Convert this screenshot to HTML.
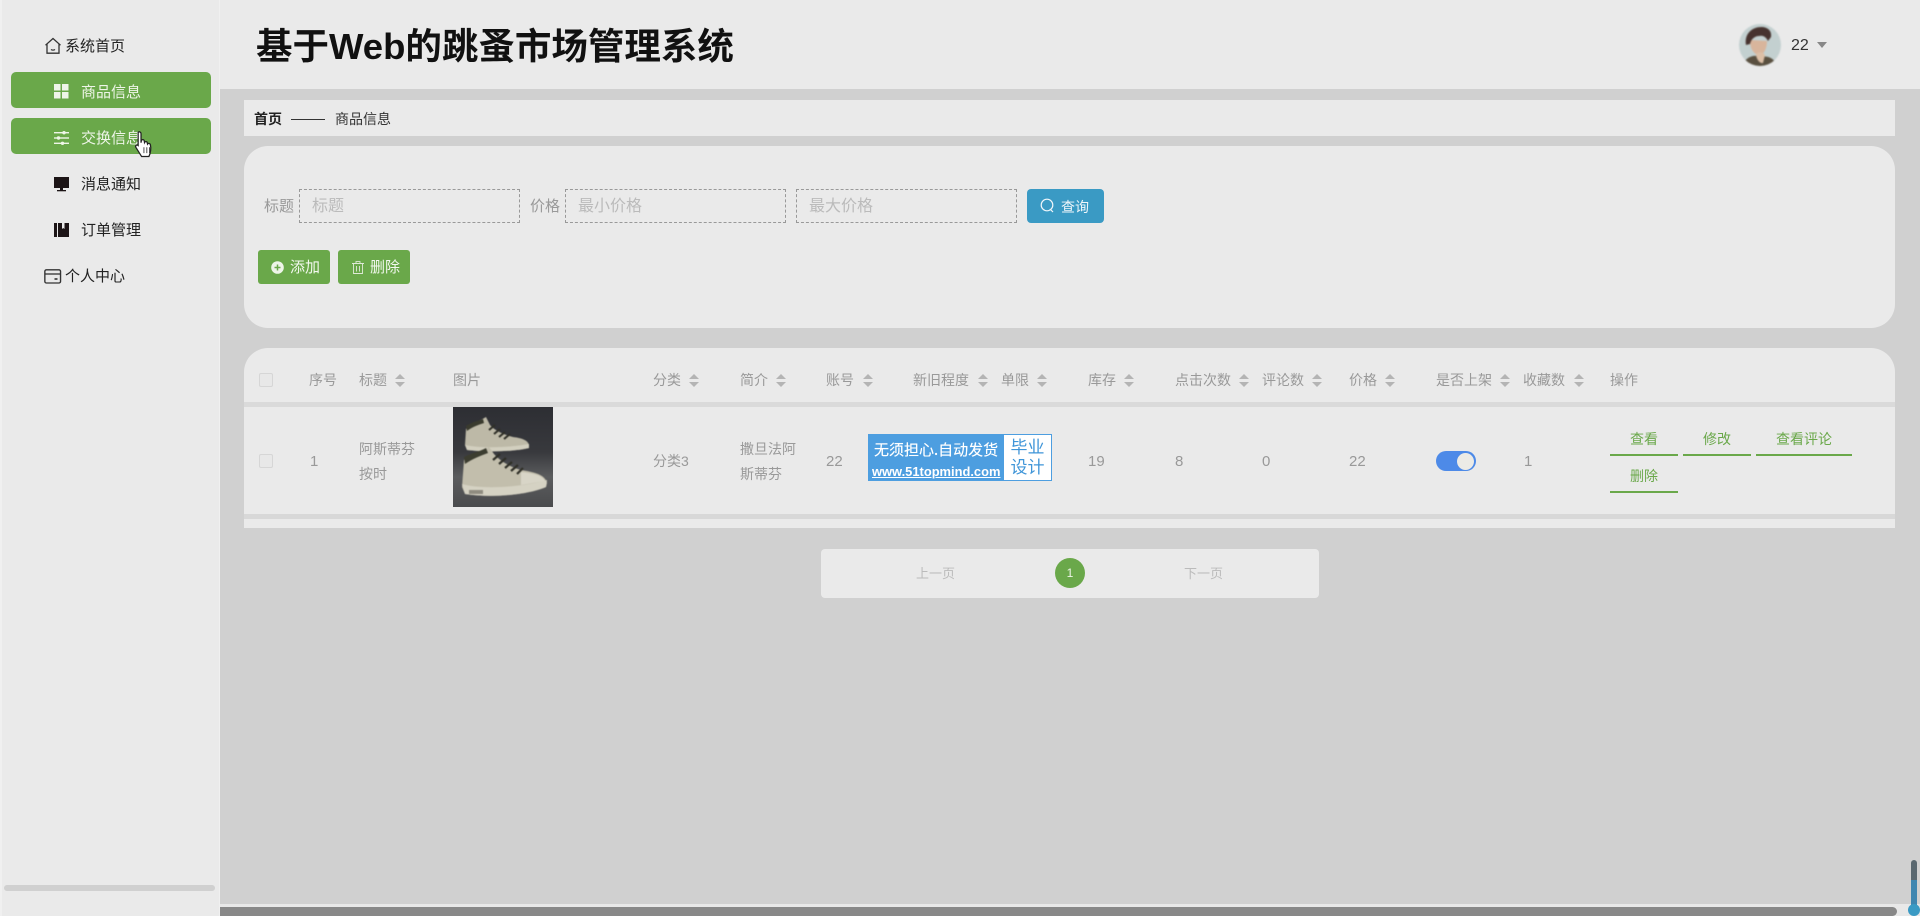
<!DOCTYPE html>
<html lang="zh"><head><meta charset="utf-8"><title>基于Web的跳蚤市场管理系统</title>
<style>
*{margin:0;padding:0;box-sizing:border-box}
html,body{width:1920px;height:916px;overflow:hidden;background:#d0d0d0}
body{position:relative;font-family:"Liberation Sans","Noto Sans CJK SC",sans-serif;font-size:14px;color:#999}
.a{position:absolute}
.t{position:absolute;height:24px;line-height:24px;white-space:nowrap}
.c{background:#eaeaea;position:absolute}
.m{position:absolute;left:11px;width:200px;height:36px;background:#6aa84a;border-radius:5px}
.mt{font-size:15px;color:#222}
.w{color:#eef5e8}
.in{position:absolute;top:189px;height:34px;width:221px;border:1px dashed #999}
.ph{font-size:16px;color:#bbb}
.lb{font-size:15px;color:#999}
.s{position:absolute;width:10px;height:13px;top:373.500px;margin-left:1px}
.s:before,.s:after{content:"";position:absolute;left:0;border-left:5px solid transparent;border-right:5px solid transparent}
.s:before{top:0;border-bottom:5.500px solid #b4b4b4}
.s:after{bottom:0;border-top:5.500px solid #b4b4b4}
.cb{position:absolute;left:259px;width:14px;height:14px;border:1px solid #d6d6d6;background:#e8e8e8;border-radius:2px}
.ac{position:absolute;height:33px;line-height:33px;text-align:center;color:#6aa84a;font-size:14px;border-bottom:2px solid #6aa84a}
.btn{position:absolute;border-radius:3px;background:#6aa84a;color:#f2f8ee;top:250px;height:34px;width:72px}
.n{font-size:15px;margin-top:1px}
svg{position:absolute;display:block}
</style></head><body>

<!-- sidebar -->
<div class="c" style="left:0;top:0;width:219px;height:916px;border-left:2px solid #f0f0f0"></div>
<div class="a" style="left:219px;top:0;width:1px;height:916px;background:#f0f0f0"></div>
<div class="m" style="top:72px"></div>
<div class="m" style="top:118px"></div>

<svg style="left:44px;top:37px" width="18" height="18" viewBox="0 0 18 18" fill="none" stroke="#333" stroke-width="1.3"><path d="M1.500 8.200 9 1.500l7.500 6.700M3 7v9.200h12V7"/><path d="M7 12.500c1 .8 3 .8 4 0"/></svg>
<div class="t mt" style="left:65px;top:34.500px">系统首页</div>

<svg style="left:54px;top:84px" width="15" height="15" viewBox="0 0 15 15" fill="#eef5e8"><rect x="0" y="0" width="6.500" height="6.500"/><rect x="8" y="0" width="6.500" height="6.500"/><rect x="0" y="8" width="6.500" height="6.500"/><rect x="8" y="8" width="6.500" height="6.500"/></svg>
<div class="t mt w" style="left:81px;top:80.500px">商品信息</div>

<svg style="left:54px;top:131px" width="15" height="14" viewBox="0 0 15 14" fill="#eef5e8"><rect y="1" width="15" height="1.400"/><rect y="6.300" width="15" height="1.400"/><rect y="11.600" width="15" height="1.400"/><circle cx="10" cy="1.700" r="1.700"/><circle cx="4.500" cy="7" r="1.700"/><circle cx="8.500" cy="12.300" r="1.700"/></svg>
<div class="t mt w" style="left:81px;top:126.500px">交换信息</div>

<svg style="left:54px;top:177px" width="15" height="15" viewBox="0 0 15 15" fill="#1c1416"><rect width="15" height="11"/><rect x="6" y="11" width="3" height="2"/><rect x="3" y="13" width="9" height="1.300"/></svg>
<div class="t mt" style="left:81px;top:172.500px">消息通知</div>

<svg style="left:54px;top:223px" width="15" height="14" viewBox="0 0 15 14" fill="#1c1416"><rect width="3" height="14"/><path d="M4 0h4v6l1.200-1 1.300 1V0H15v14H4z"/></svg>
<div class="t mt" style="left:81px;top:218.500px">订单管理</div>

<svg style="left:44px;top:269px" width="18" height="15" viewBox="0 0 18 15" fill="none" stroke="#333" stroke-width="1.3"><rect x=".8" y=".8" width="14.800" height="13.200" rx="1.500" transform="scale(1.06 1)"/><path d="M1 5h16"/><path d="M10.500 10h3" stroke-width="1.600"/></svg>
<div class="t mt" style="left:65px;top:264.500px">个人中心</div>

<div class="a" style="left:4px;top:885px;width:211px;height:6px;background:#d0d0d0;border-radius:3px"></div>

<!-- cursor -->
<svg style="left:134px;top:130px" width="21" height="30" viewBox="0 0 18 26"><path d="M3.500 2c1.200-1 2.500 0 2.500 1.200V11l.3-2c.8-1 2.200-.8 2.500.3l.2 1.500c.5-1 2.100-1 2.400.2l.2 1.200c.7-.9 2.200-.7 2.500.5.700 3 .300 7.300-1.300 10.300H6.500L1.500 15c-.7-1.300.6-2.700 2-1.600V3.500z" fill="#fff" stroke="#222" stroke-width="1.100"/><path d="M8.500 15v5M11 15v5M13.300 15v5" stroke="#444" stroke-width=".8"/></svg>

<!-- header -->
<div class="c" style="left:220px;top:0;width:1700px;height:89px"></div>
<div class="a" style="left:256px;top:23px;height:48px;line-height:48px;font-size:36.500px;font-weight:700;color:#111;white-space:nowrap">基于Web的跳蚤市场管理系统</div>

<svg style="left:1739px;top:24px;filter:blur(.7px)" width="42" height="42" viewBox="0 0 42 42"><defs><clipPath id="av"><circle cx="21" cy="21" r="21"/></clipPath></defs><g clip-path="url(#av)"><rect width="42" height="42" fill="#c3d0d0"/><path d="M4 42c1-7 8-11 14-10s16-2 20 10z" fill="#5a5040"/><path d="M11 16c0 8 3 14 9 15 5 0 8-7 8-14z" fill="#d8b59c"/><path d="M17 30c3-3 7-2 9 1l-2 8c-3 1-7-4-7-9z" fill="#dcbfa6"/><path d="M7 21C5 9 14 3 22 3c7 0 11 4 10 10l-3 4c-2-4-5-6-9-5-4 0-8 3-9 8z" fill="#47332f"/></g></svg>
<div class="t" style="left:1791px;top:33.500px;font-size:16px;color:#333">22</div>
<div class="a" style="left:1817px;top:42px;border-left:5px solid transparent;border-right:5px solid transparent;border-top:6px solid #888"></div>

<!-- breadcrumb -->
<div class="c" style="left:244px;top:100px;width:1651px;height:36px"></div>
<div class="t" style="left:254px;top:107px;font-weight:700;color:#222">首页</div>
<div class="a" style="left:291px;top:119px;width:34px;height:1px;background:#333"></div>
<div class="t" style="left:335px;top:107px;color:#333">商品信息</div>

<!-- search -->
<div class="c" style="left:244px;top:146px;width:1651px;height:182px;border-radius:24px"></div>
<div class="t lb" style="left:264px;top:195px">标题</div>
<div class="in" style="left:299px"></div>
<div class="t ph" style="left:312px;top:195px">标题</div>
<div class="t lb" style="left:530px;top:195px">价格</div>
<div class="in" style="left:565px"></div>
<div class="t ph" style="left:578px;top:195px">最小价格</div>
<div class="in" style="left:796px"></div>
<div class="t ph" style="left:809px;top:195px">最大价格</div>
<div class="a" style="left:1027px;top:189px;width:77px;height:34px;background:#3a9ac4;border-radius:4px"></div>
<svg style="left:1040px;top:198px" width="15" height="15" viewBox="0 0 15 15" fill="none" stroke="#f0f6fa" stroke-width="1.200"><circle cx="7" cy="7" r="5.800"/><path d="M10.500 11.500l2.500 2.500"/></svg>
<div class="t" style="left:1061px;top:195px;color:#f0f6fa">查询</div>

<div class="btn" style="left:258px"></div>
<svg style="left:271px;top:261px" width="13" height="13" viewBox="0 0 13 13"><circle cx="6.500" cy="6.500" r="6.300" fill="#eef5e8"/><path d="M6.500 3.500v6M3.500 6.500h6" stroke="#6aa84a" stroke-width="1.500"/></svg>
<div class="t" style="left:290px;top:256px;font-size:15px;color:#f2f8ee">添加</div>
<div class="btn" style="left:338px"></div>
<svg style="left:352px;top:261px" width="12" height="13" viewBox="0 0 12 13" fill="none" stroke="#dfe9d8" stroke-width=".9"><path d="M0 2.500h12M4 2.500V.6h4v1.900M1.500 2.500v10h9v-10M4.500 5v5.500M7.500 5v5.500"/></svg>
<div class="t" style="left:370px;top:256px;font-size:15px;color:#f2f8ee">删除</div>

<!-- table -->
<div class="c" style="left:244px;top:348px;width:1651px;height:54px;border-radius:24px 24px 0 0"></div>
<div class="a" style="left:244px;top:402px;width:1651px;height:5px;background:#dadada"></div>
<div class="c" style="left:244px;top:407px;width:1651px;height:107px"></div>
<div class="a" style="left:244px;top:514px;width:1651px;height:5px;background:#d8d8d8"></div>
<div class="c" style="left:244px;top:519px;width:1651px;height:9px"></div>

<div class="cb" style="top:373px"></div>
<div class="t" style="left:309px;top:368px">序号</div>
<div class="t" style="left:359px;top:368px">标题</div><div class="s" style="left:394px"></div>
<div class="t" style="left:453px;top:368px">图片</div>
<div class="t" style="left:653px;top:368px">分类</div><div class="s" style="left:688px"></div>
<div class="t" style="left:740px;top:368px">简介</div><div class="s" style="left:775px"></div>
<div class="t" style="left:826px;top:368px">账号</div><div class="s" style="left:862px"></div>
<div class="t" style="left:913px;top:368px">新旧程度</div><div class="s" style="left:977px"></div>
<div class="t" style="left:1001px;top:368px">单限</div><div class="s" style="left:1036px"></div>
<div class="t" style="left:1088px;top:368px">库存</div><div class="s" style="left:1123px"></div>
<div class="t" style="left:1175px;top:368px">点击次数</div><div class="s" style="left:1238px"></div>
<div class="t" style="left:1262px;top:368px">评论数</div><div class="s" style="left:1311px"></div>
<div class="t" style="left:1349px;top:368px">价格</div><div class="s" style="left:1384px"></div>
<div class="t" style="left:1436px;top:368px">是否上架</div><div class="s" style="left:1499px"></div>
<div class="t" style="left:1523px;top:368px">收藏数</div><div class="s" style="left:1573px"></div>
<div class="t" style="left:1610px;top:368px">操作</div>

<div class="cb" style="top:454px"></div>
<div class="t n" style="left:310px;top:449px">1</div>
<div class="t" style="left:359px;top:437px">阿斯蒂芬</div>
<div class="t" style="left:359px;top:461.500px">按时</div>

<svg style="left:453px;top:407px" width="100" height="100" viewBox="0 0 100 100">
<defs><linearGradient id="bg" x1="0" y1="0" x2="0" y2="1"><stop offset="0" stop-color="#2d2e33"/><stop offset=".45" stop-color="#38393d"/><stop offset=".7" stop-color="#5b5c5e"/><stop offset="1" stop-color="#4a4b4d"/></linearGradient></defs>
<rect width="100" height="100" fill="url(#bg)"/>
<g style="filter:blur(.5px)">
<path d="M13 22C18 16 27 14 33 10L37 18C42 24 52 28 60 30C68 31 75 33 76 38L76 41C60 45 30 45 14 43L12 38Z" fill="#bdb9a7"/>
<path d="M12 38C30 42 60 40 76 37L76 41C60 45 30 45 14 43Z" fill="#d2cfbf"/>
<path d="M13 19C19 15 25 14 30 12L31 16C25 18 19 20 14 24Z" fill="#3a3b2e"/>
<path d="M36 23l6-5M41 27l6-5M46 30l6-5M51 32l6-5" stroke="#2f2f27" stroke-width="2" fill="none"/>
<path d="M11 53C18 47 28 46 36 40L41 47C48 55 58 60 68 63C80 65 92 67 94 76L93 80C80 86 45 92 12 87L9 80Z" fill="#c2beac"/>
<path d="M9 77C30 83 70 80 94 73L93 80C80 86 45 92 12 87Z" fill="#d5d2c3"/>
<path d="M11 50C18 46 26 45 33 41L35 46C27 49 19 52 12 57Z" fill="#3c3d30"/>
<path d="M40 53l7-6M46 57l7-6M52 61l7-6M58 64l7-6M64 67l6-6" stroke="#2f2f27" stroke-width="2.200" fill="none"/>
<path d="M68 65C78 66 90 68 92 74L68 78Z" fill="#d8d5c7"/>
<rect x="16" y="83" width="14" height="4" fill="#8f8c80"/>
</g>
</svg>

<div class="t" style="left:653px;top:449px">分类3</div>
<div class="t" style="left:740px;top:437px">撒旦法阿</div>
<div class="t" style="left:740px;top:461.500px">斯蒂芬</div>
<div class="t n" style="left:826px;top:449px">22</div>

<div class="a" style="left:868px;top:434px;width:184px;height:47px;background:#4d9ee0"></div>
<div class="a" style="left:1004px;top:435px;width:47px;height:45px;background:#fff"></div>
<div class="t" style="left:874px;top:437.500px;font-size:15px;color:#fff;font-family:'Noto Sans CJK SC',sans-serif;text-shadow:0 0 .4px #fff">无须担心.自动发货</div>
<div class="t" style="left:872px;top:459.500px;font-size:12.900px;color:#fff;text-decoration:underline;font-weight:700">www.51topmind.com</div>
<div class="a" style="left:1004px;top:438px;width:47px;text-align:center;font-size:17px;line-height:20px;color:#3f95d8">毕业<br>设计</div>

<div class="t n" style="left:1088px;top:449px">19</div>
<div class="t n" style="left:1175px;top:449px">8</div>
<div class="t n" style="left:1262px;top:449px">0</div>
<div class="t n" style="left:1349px;top:449px">22</div>
<div class="a" style="left:1436px;top:451px;width:40px;height:20px;border-radius:10px;background:#4d8ae8"></div>
<div class="a" style="left:1457px;top:452.500px;width:17px;height:17px;border-radius:50%;background:#ecebe6"></div>
<div class="t n" style="left:1524px;top:449px">1</div>

<div class="ac" style="left:1610px;top:423px;width:68px">查看</div>
<div class="ac" style="left:1683px;top:423px;width:68px">修改</div>
<div class="ac" style="left:1756px;top:423px;width:96px">查看评论</div>
<div class="ac" style="left:1610px;top:460px;width:68px">删除</div>

<!-- pagination -->
<div class="c" style="left:821px;top:549px;width:498px;height:49px;border-radius:4px"></div>
<div class="t" style="left:916px;top:561.500px;font-size:13px;color:#bbb">上一页</div>
<div class="a" style="left:1055px;top:558px;width:30px;height:30px;border-radius:50%;background:#6aa84a;color:#eef5e8;text-align:center;line-height:30px;font-size:12px">1</div>
<div class="t" style="left:1184px;top:561.500px;font-size:13px;color:#bbb">下一页</div>

<!-- bottom scrollbars -->
<div class="a" style="left:220px;top:904px;width:1700px;height:12px;background:#e8e8e8"></div>
<div class="a" style="left:220px;top:907px;width:1677px;height:9px;background:#888;border-radius:0 5px 5px 0"></div>
<div class="a" style="left:1911px;top:860px;width:6px;height:50px;background:#5a6870;border-radius:3px 3px 0 0"></div>
<div class="a" style="left:1911px;top:880px;width:6px;height:30px;background:#3f86b0"></div>
<div class="a" style="left:1908px;top:904px;width:12px;height:12px;border-radius:50%;background:#3a9ac4"></div>
</body></html>
